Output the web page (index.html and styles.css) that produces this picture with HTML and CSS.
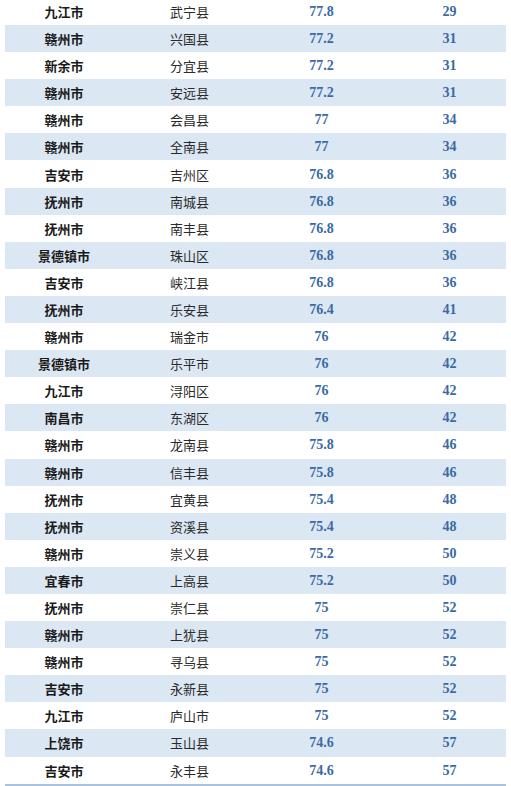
FILE: index.html
```html
<!DOCTYPE html>
<html lang="zh">
<head>
<meta charset="utf-8">
<link rel="stylesheet" href="styles.css">
</head>
<body>
<div class="table">
  <div class="row"><div class="city">九江市</div><div class="county">武宁县</div><div class="score">77.8</div><div class="rank">29</div></div>
  <div class="row"><div class="city">赣州市</div><div class="county">兴国县</div><div class="score">77.2</div><div class="rank">31</div></div>
  <div class="row"><div class="city">新余市</div><div class="county">分宜县</div><div class="score">77.2</div><div class="rank">31</div></div>
  <div class="row"><div class="city">赣州市</div><div class="county">安远县</div><div class="score">77.2</div><div class="rank">31</div></div>
  <div class="row"><div class="city">赣州市</div><div class="county">会昌县</div><div class="score">77</div><div class="rank">34</div></div>
  <div class="row"><div class="city">赣州市</div><div class="county">全南县</div><div class="score">77</div><div class="rank">34</div></div>
  <div class="row"><div class="city">吉安市</div><div class="county">吉州区</div><div class="score">76.8</div><div class="rank">36</div></div>
  <div class="row"><div class="city">抚州市</div><div class="county">南城县</div><div class="score">76.8</div><div class="rank">36</div></div>
  <div class="row"><div class="city">抚州市</div><div class="county">南丰县</div><div class="score">76.8</div><div class="rank">36</div></div>
  <div class="row"><div class="city">景德镇市</div><div class="county">珠山区</div><div class="score">76.8</div><div class="rank">36</div></div>
  <div class="row"><div class="city">吉安市</div><div class="county">峡江县</div><div class="score">76.8</div><div class="rank">36</div></div>
  <div class="row"><div class="city">抚州市</div><div class="county">乐安县</div><div class="score">76.4</div><div class="rank">41</div></div>
  <div class="row"><div class="city">赣州市</div><div class="county">瑞金市</div><div class="score">76</div><div class="rank">42</div></div>
  <div class="row"><div class="city">景德镇市</div><div class="county">乐平市</div><div class="score">76</div><div class="rank">42</div></div>
  <div class="row"><div class="city">九江市</div><div class="county">浔阳区</div><div class="score">76</div><div class="rank">42</div></div>
  <div class="row"><div class="city">南昌市</div><div class="county">东湖区</div><div class="score">76</div><div class="rank">42</div></div>
  <div class="row"><div class="city">赣州市</div><div class="county">龙南县</div><div class="score">75.8</div><div class="rank">46</div></div>
  <div class="row"><div class="city">赣州市</div><div class="county">信丰县</div><div class="score">75.8</div><div class="rank">46</div></div>
  <div class="row"><div class="city">抚州市</div><div class="county">宜黄县</div><div class="score">75.4</div><div class="rank">48</div></div>
  <div class="row"><div class="city">抚州市</div><div class="county">资溪县</div><div class="score">75.4</div><div class="rank">48</div></div>
  <div class="row"><div class="city">赣州市</div><div class="county">崇义县</div><div class="score">75.2</div><div class="rank">50</div></div>
  <div class="row"><div class="city">宜春市</div><div class="county">上高县</div><div class="score">75.2</div><div class="rank">50</div></div>
  <div class="row"><div class="city">抚州市</div><div class="county">崇仁县</div><div class="score">75</div><div class="rank">52</div></div>
  <div class="row"><div class="city">赣州市</div><div class="county">上犹县</div><div class="score">75</div><div class="rank">52</div></div>
  <div class="row"><div class="city">赣州市</div><div class="county">寻乌县</div><div class="score">75</div><div class="rank">52</div></div>
  <div class="row"><div class="city">吉安市</div><div class="county">永新县</div><div class="score">75</div><div class="rank">52</div></div>
  <div class="row"><div class="city">九江市</div><div class="county">庐山市</div><div class="score">75</div><div class="rank">52</div></div>
  <div class="row"><div class="city">上饶市</div><div class="county">玉山县</div><div class="score">74.6</div><div class="rank">57</div></div>
  <div class="row"><div class="city">吉安市</div><div class="county">永丰县</div><div class="score">74.6</div><div class="rank">57</div></div>
</div>
</body>
</html>
```

FILE: styles.css
```css
html, body {
  margin: 0;
  padding: 0;
  background: #ffffff;
  overflow: hidden;
}

.table {
  margin: -2.1px 5px 0 5px;
  width: 501px;
  border-bottom: 2px solid #a9c3df;
}

.row {
  display: grid;
  grid-template-columns: 118px 136px 125px 122px;
  height: 27.1px;
  align-items: center;
}

.row:nth-child(even) {
  background: #dce7f4;
}

.row > div {
  text-align: center;
  line-height: 27px;
  white-space: nowrap;
}

.city {
  font-family: "Noto Sans CJK SC", "Noto Sans", sans-serif;
  font-size: 13px;
  font-weight: 700;
  color: #1a1a1a;
}

.county {
  font-family: "Noto Sans CJK SC", "Noto Sans", sans-serif;
  font-size: 13px;
  font-weight: 400;
  color: #2a2a2a;
  padding-right: 3px;
}

.score, .rank {
  font-family: "Liberation Serif", "Times New Roman", serif;
  font-size: 14px;
  font-weight: 700;
  color: #3a6aa3;
}

.rank {
  padding-left: 9px;
}
```
